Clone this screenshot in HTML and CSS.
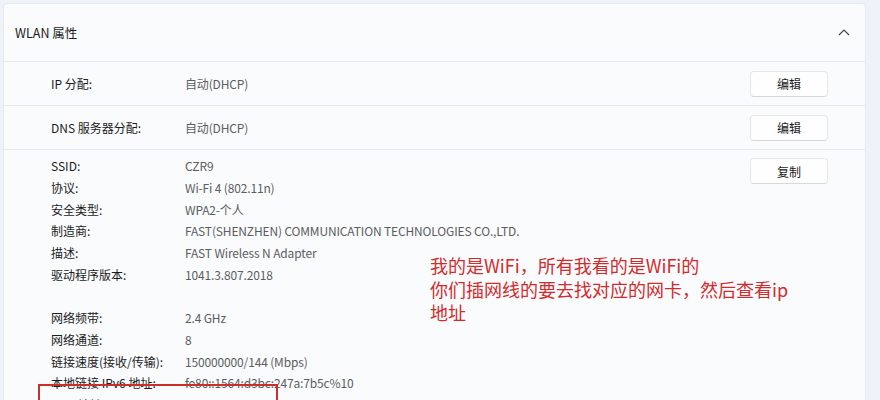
FILE: index.html
```html
<!DOCTYPE html>
<html lang="zh-CN">
<head>
  <meta charset="UTF-8">
  <title>WLAN 属性</title>
  <link rel="stylesheet" href="styles.css">
</head>
<body>

<div class="card">
  <div class="card-head">
    <span>WLAN 属性</span>
    <svg class="chevron" width="12" height="8" viewBox="0 0 12 8">
      <path d="M1 7 L6 2 L11 7" fill="none" stroke="#444" stroke-width="1.1"/>
    </svg>
  </div>

  <div class="row">
    <span class="label">IP 分配:</span>
    <span class="value">自动(DHCP)</span>
    <button class="btn">编辑</button>
  </div>

  <div class="row">
    <span class="label">DNS 服务器分配:</span>
    <span class="value">自动(DHCP)</span>
    <button class="btn">编辑</button>
  </div>

  <div class="details">
    <div class="props">
      <span class="label">SSID:</span><span class="value">CZR9</span>
      <span class="label">协议:</span><span class="value">Wi-Fi 4 (802.11n)</span>
      <span class="label">安全类型:</span><span class="value">WPA2-个人</span>
      <span class="label">制造商:</span><span class="value">FAST(SHENZHEN) COMMUNICATION TECHNOLOGIES CO.,LTD.</span>
      <span class="label">描述:</span><span class="value">FAST Wireless N Adapter</span>
      <span class="label">驱动程序版本:</span><span class="value">1041.3.807.2018</span>
      <span class="label"></span><span class="value"></span>
      <span class="label">网络频带:</span><span class="value">2.4 GHz</span>
      <span class="label">网络通道:</span><span class="value">8</span>
      <span class="label">链接速度(接收/传输):</span><span class="value">150000000/144 (Mbps)</span>
      <span class="label">本地链接 IPv6 地址:</span><span class="value">fe80::1564:d3bc:247a:7b5c%10</span>
      <span class="label">IPv4 地址:</span><span class="value">192.168.1.105</span>
    </div>
    <button class="btn">复制</button>

    <!-- annotation drawn over the screenshot -->
    <div class="note">
      我的是WiFi，所有我看的是WiFi的<br>
      你们插网线的要去找对应的网卡，然后查看ip<br>
      地址
    </div>
    <div class="mark"></div>
  </div>
</div>

</body>
</html>
```

FILE: styles.css
```css
body {
  margin: 0;
  padding: 3px 14px 0 3px;
  height: 400px;
  overflow: hidden;
  box-sizing: border-box;
  background: #eef3f9;
  font-family: "Noto Sans CJK SC", "Noto Sans", sans-serif;
  font-size: 12px;
  color: #1b1b1b;
}

.card {
  background: #f9fbfd;
  border: 1px solid #e6e9ed;
  border-radius: 4px 4px 0 0;
}

.card-head {
  display: flex;
  align-items: center;
  justify-content: space-between;
  height: 57px;
  padding: 0 15px 0 11px;
  font-size: 12.5px;
  border-bottom: 1px solid #e6e9ed;
}

.chevron {
  margin-top: -2px;
}

.row {
  display: flex;
  align-items: center;
  height: 43px;
  padding: 0 37px 0 47px;
  border-bottom: 1px solid #e6e9ed;
}

.row .label {
  width: 134px;
}

.value {
  color: #5d5d5d;
  letter-spacing: -0.15px;
}

.row .value {
  flex: 1;
}

.btn {
  width: 78px;
  height: 26px;
  padding: 0;
  background: #fefefe;
  border: 1px solid #e7e7e7;
  border-bottom-color: #d8d8d8;
  border-radius: 4px;
  font-family: inherit;
  font-size: 12px;
  color: #1b1b1b;
}

.details {
  position: relative;
  display: flex;
  align-items: flex-start;
  padding: 5px 37px 0 47px;
  height: 260px;
}

.props {
  flex: 1;
  display: grid;
  grid-template-columns: 134px 1fr;
  grid-auto-rows: 21.7px;
  align-items: center;
}

.details .btn {
  margin-top: 3px;
}

.note {
  position: absolute;
  left: 426px;
  top: 104px;
  font-size: 18px;
  line-height: 23.5px;
  color: #d22b2b;
}

.mark {
  position: absolute;
  left: 34px;
  top: 234px;
  width: 236px;
  height: 60px;
  border: 2px solid #c9302c;
}
```
